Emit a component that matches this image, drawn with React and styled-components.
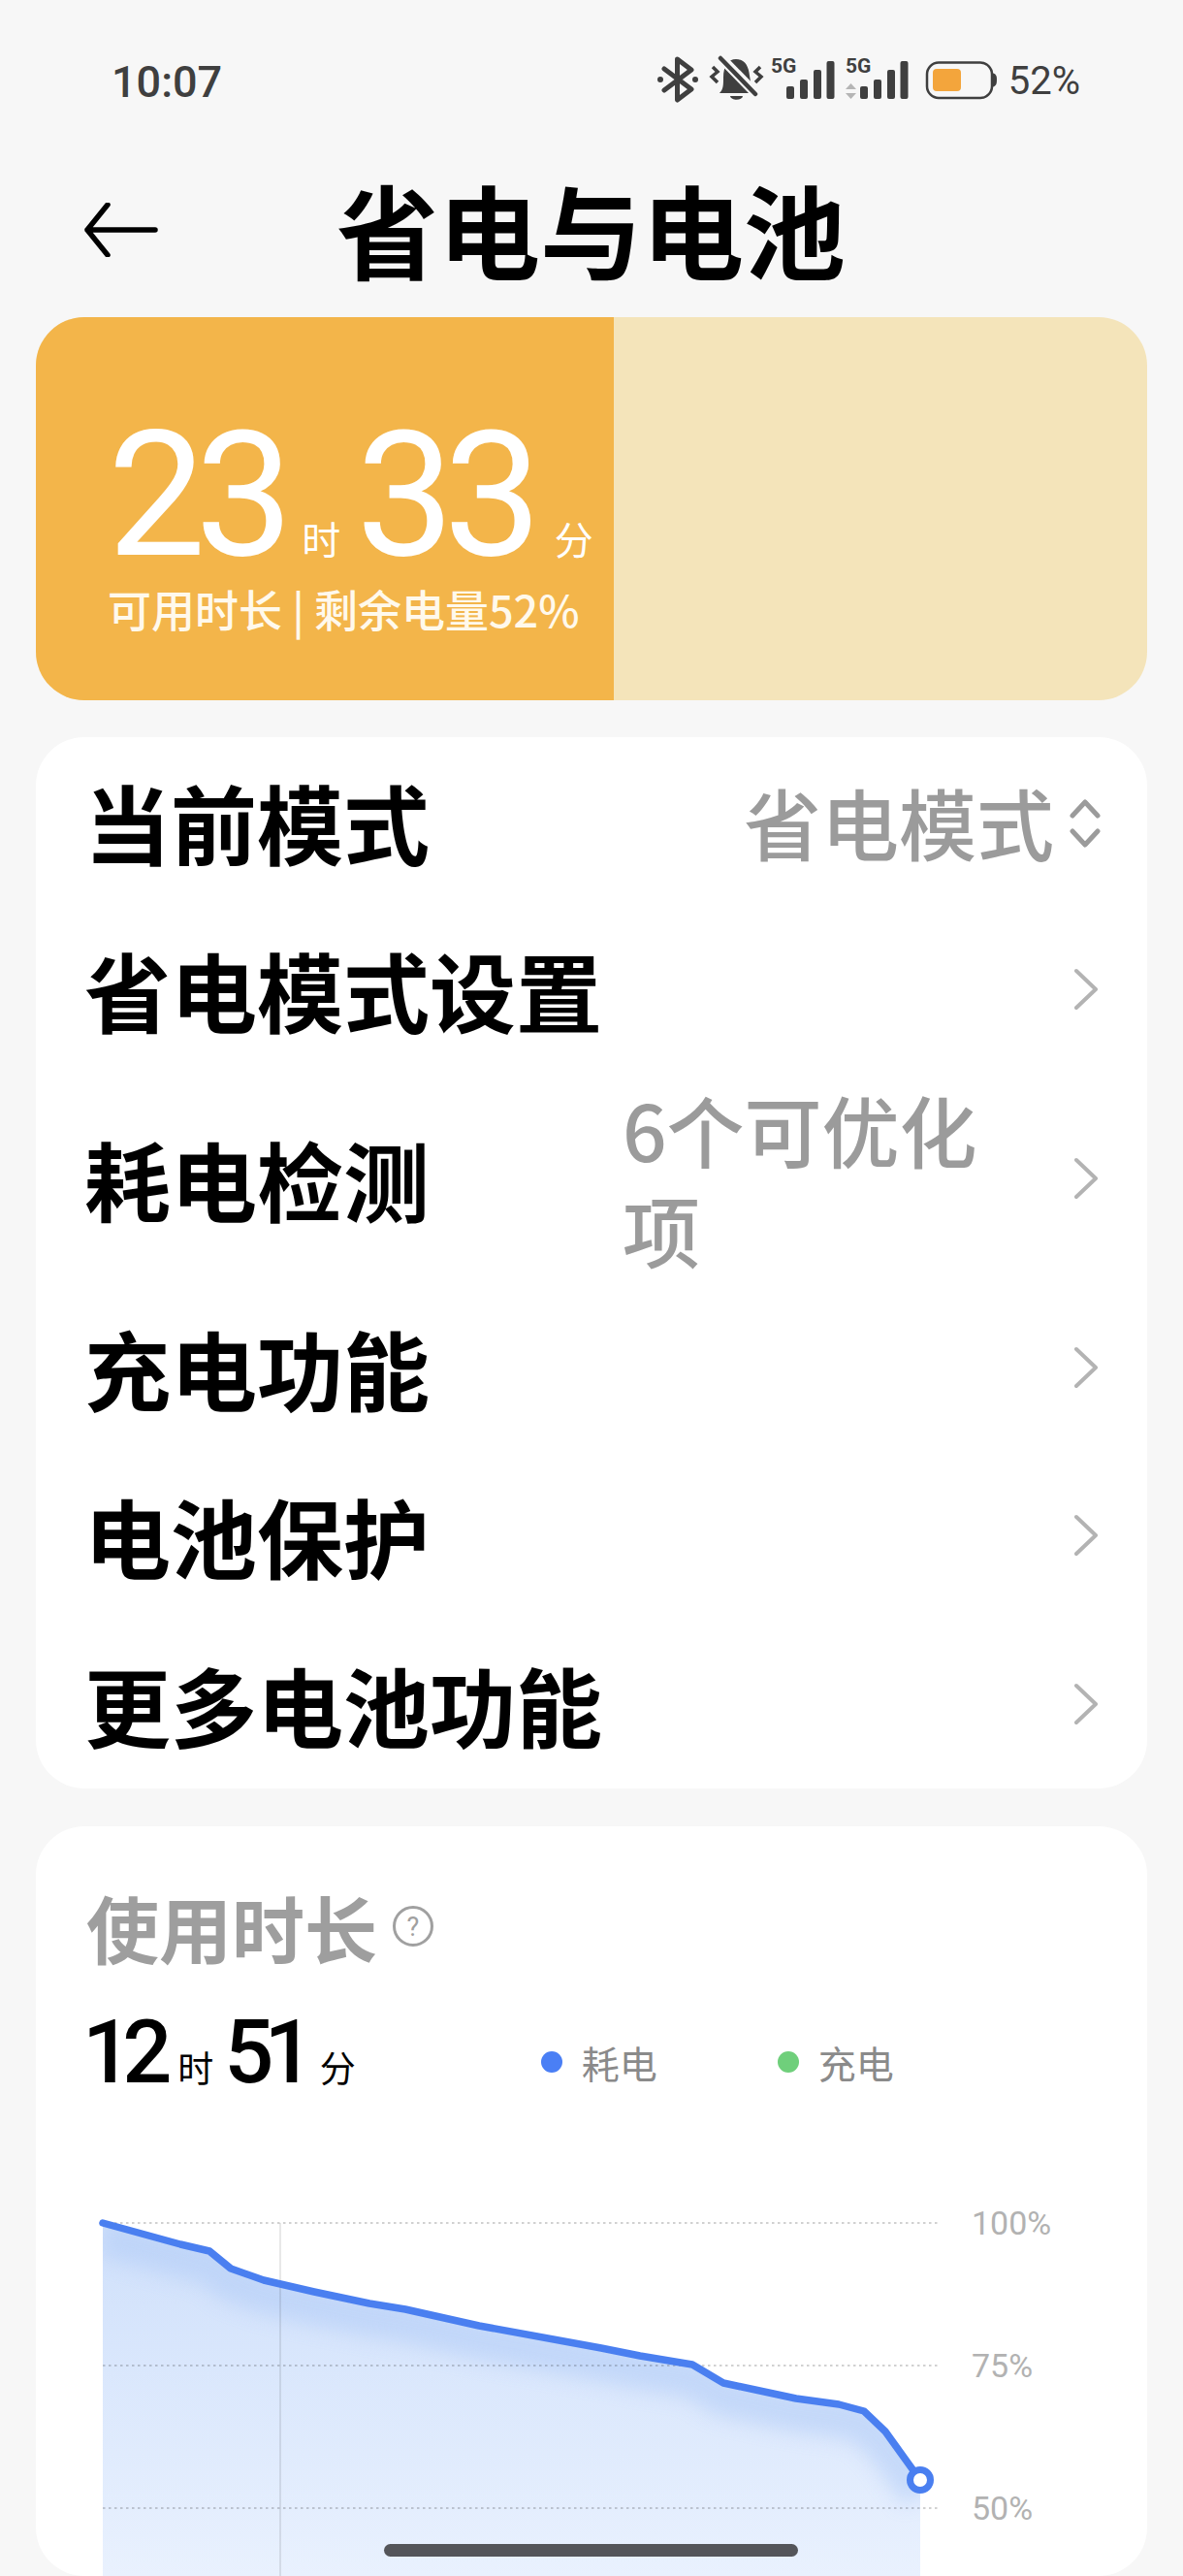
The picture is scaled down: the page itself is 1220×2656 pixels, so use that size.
import React from 'react'
import styled, { createGlobalStyle } from 'styled-components'

const GlobalStyle = createGlobalStyle`
  html, body {
    margin: 0;
    padding: 0;
    background: #f7f7f7;
  }
  * {
    box-sizing: border-box;
  }
`

const cjk = '"Noto Sans CJK SC", "Noto Sans", sans-serif'
const latin = 'Roboto, "Noto Sans CJK SC", sans-serif'

const Page = styled.div`
  position: relative;
  width: 1220px;
  height: 2656px;
  padding: 0 37px;
  overflow: hidden;
  background: #f7f7f7;
  font-family: ${cjk};
`

const StatusBar = styled.div`
  height: 168px;
  display: flex;
  align-items: center;
  padding: 0 69px 0 78px;
  color: #3f3f3f;
  font-family: ${latin};
`

const Clock = styled.span`
  font-size: 45px;
  font-weight: 500;
  flex: 1;
`

const Percent = styled.span`
  font-size: 40px;
  font-weight: 400;
  margin-left: 11px;
  margin-top: -2px;
`

const StatusIcons = styled.svg`
  display: block;
  width: 352px;
  height: 50px;
  margin-top: -6px;
`

const Header = styled.div`
  height: 159px;
  padding-bottom: 28px;
  display: flex;
  align-items: center;
`

const BackIcon = styled.svg`
  width: 76px;
  height: 56px;
  margin-left: 50px;
  margin-top: 6px;
`

const Title = styled.h1`
  margin: 0 0 0 184px;
  font-size: 105px;
  line-height: 120px;
  font-weight: 700;
  color: #000;
`

const HeroCard = styled.div`
  height: 395px;
  display: flex;
  border-radius: 50px;
  overflow: hidden;
  background: #f4e4ba;
`

const HeroFill = styled.div`
  width: 596px;
  padding: 108px 0 0 74px;
  background: #f3b54a;
  color: #fff;
`

const HeroTime = styled.div`
  display: flex;
  align-items: baseline;
  height: 152px;
`

const HeroNumber = styled.span`
  font-family: ${latin};
  font-size: 180px;
  line-height: 152px;
  font-weight: 400;
  letter-spacing: -11px;
  margin-left: ${p => p.$gap}px;
`

const HeroUnit = styled.span`
  font-size: 40px;
  line-height: 40px;
  margin-left: ${p => p.$gap}px;
`

const HeroCaption = styled.div`
  margin-top: 11px;
  font-size: 45px;
  line-height: 60px;
  font-weight: 500;
  white-space: nowrap;
  color: #fff9ec;
`

const Card = styled.section`
  margin-top: ${p => p.$top}px;
  border-radius: 50px;
  background: #fff;
`

const Row = styled.div`
  height: ${p => (p.$tall ? 216 : 173.5)}px;
  display: flex;
  align-items: center;
  padding: 0 51px 0 50px;
`

const RowLabel = styled.span`
  flex: 1;
  font-size: 89px;
  line-height: 110px;
  font-weight: 700;
  color: #000;
  white-space: nowrap;
`

const RowValue = styled.span`
  width: ${p => (p.$wrap ? '430px' : 'auto')};
  margin-right: ${p => (p.$wrap ? 36 : 16)}px;
  font-size: 80px;
  line-height: 103px;
  font-weight: 500;
  color: #9b9b9b;
`

const Chevron = styled.svg`
  display: block;
  width: 24px;
  height: 44px;
  fill: none;
  stroke: #b3b3b3;
  stroke-width: 4;
  stroke-linecap: round;
  stroke-linejoin: round;
`

const UpDown = styled.svg`
  display: block;
  width: 32px;
  height: 50px;
  margin-right: -3px;
  margin-top: 4px;
  fill: none;
  stroke: #9b9b9b;
  stroke-width: 5;
  stroke-linecap: round;
  stroke-linejoin: round;
`

const UsageCard = styled(Card)`
  padding-top: 54px;
`

const UsageTitle = styled.div`
  display: flex;
  align-items: center;
  padding-left: 52px;
  height: 100px;
`

const UsageHeading = styled.h2`
  margin: 0;
  font-size: 75px;
  line-height: 100px;
  font-weight: 700;
  color: #9e9e9e;
`

const HelpIcon = styled.svg`
  display: block;
  width: 44px;
  height: 44px;
  margin-left: 15px;
  margin-top: -2px;
`

const StatRow = styled.div`
  margin-top: 35px;
  height: 90px;
  display: flex;
  align-items: baseline;
  padding-left: 48px;
  color: #000;
`

const StatNumber = styled.span`
  font-family: ${latin};
  font-size: 90px;
  line-height: 90px;
  font-weight: 500;
  letter-spacing: -10px;
  margin-left: ${p => p.$gap}px;
`

const StatUnit = styled.span`
  font-size: 37px;
  line-height: 40px;
  margin-left: ${p => p.$gap}px;
`

const Legend = styled.div`
  display: flex;
  align-items: center;
  gap: 124px;
  margin-left: 191px;
  align-self: center;
  margin-top: 18px;
`

const LegendItem = styled.span`
  display: flex;
  align-items: center;
  gap: 20px;
  font-size: 39px;
  line-height: 40px;
  color: #8a8a8a;
`

const Dot = styled.i`
  display: block;
  width: 22px;
  height: 22px;
  border-radius: 50%;
  background: ${p => p.$color};
`

const Chart = styled.svg`
  display: block;
  width: 1146px;
  height: 416px;
  margin-top: 78px;
`

const AxisLabel = styled.text`
  font-family: ${latin};
  font-size: 34px;
  fill: #b2b2b2;
  dominant-baseline: central;
`

const HomeBar = styled.div`
  position: absolute;
  left: 396px;
  top: 2623px;
  width: 427px;
  height: 13px;
  border-radius: 7px;
  background: #54555a;
`

const linePoints = [
  [106, 2292], [186, 2314], [216, 2321], [238, 2339], [272, 2351], [324, 2363],
  [381, 2375], [418, 2381], [494, 2398], [620, 2421], [660, 2429], [714, 2438],
  [746, 2457], [821, 2473], [865, 2479], [891, 2486], [913, 2507], [949, 2557],
]
const linePath = 'M' + linePoints.map(p => p.join(' ')).join(' L')
const areaPath = `${linePath} L949 2656 L106 2656 Z`

const BatteryChart = () => (
  <Chart viewBox="37 2240 1146 416">
    <defs>
      <linearGradient id="areaFill" x1="0" y1="0" x2="0" y2="1">
        <stop offset="0" stopColor="#cfe0fb" />
        <stop offset="1" stopColor="#e9f1fe" />
      </linearGradient>
      <clipPath id="areaClip">
        <path d={areaPath} />
      </clipPath>
      <filter id="soft" x="-10%" y="-30%" width="120%" height="160%">
        <feGaussianBlur stdDeviation="10" />
      </filter>
    </defs>
    <path d={areaPath} fill="url(#areaFill)" />
    <g clipPath="url(#areaClip)">
      <path d={linePath} transform="translate(0 14)" fill="none" stroke="#b4cdf7" strokeWidth="40" opacity="0.6" filter="url(#soft)" />
    </g>
    <line x1="289" y1="2292" x2="289" y2="2656" stroke="#000" strokeOpacity="0.09" strokeWidth="2" />
    {[2292, 2439, 2586].map(y => (
      <line key={y} x1="106" y1={y} x2="967" y2={y} stroke="#000" strokeOpacity="0.18" strokeWidth="2" strokeDasharray="2.5 3.5" />
    ))}
    <path d={linePath} fill="none" stroke="#4a7ff0" strokeWidth="7.5" strokeLinecap="round" strokeLinejoin="round" />
    <circle cx="949" cy="2557" r="10.5" fill="#fff" stroke="#4a7ff0" strokeWidth="7" />
    <AxisLabel x="1002" y="2292">100%</AxisLabel>
    <AxisLabel x="1002" y="2439">75%</AxisLabel>
    <AxisLabel x="1002" y="2586">50%</AxisLabel>
  </Chart>
)

const Signal = ({ x, arrows }) => (
  <g>
    <text x={x} y="75" fontFamily="Roboto, sans-serif" fontWeight="700" fontSize="21" fill="#3f3f3f">5G</text>
    {arrows && (
      <g fill="#b5b5b5">
        <path d="M873 92 L878.5 86 L884 92 Z" />
        <path d="M873 96 L884 96 L878.5 102 Z" />
      </g>
    )}
    {[[0, 89], [14, 82], [28, 72], [41.5, 63]].map(([dx, top]) => (
      <rect key={dx} x={x + (arrows ? 15 : 16) + dx} y={top} width="8" height={102 - top} rx="2" fill="#3f3f3f" />
    ))}
  </g>
)

const StatusGlyphs = () => (
  <StatusIcons viewBox="678 56 352 50">
    {/* bluetooth */}
    <g fill="none" stroke="#3f3f3f" strokeWidth="5" strokeLinejoin="round" strokeLinecap="round">
      <path d="M686 71 L714 92 L699.5 103 L699.5 61 L714 72 L686 93" />
    </g>
    <circle cx="682" cy="82" r="3" fill="#3f3f3f" />
    <circle cx="718" cy="82" r="3" fill="#3f3f3f" />
    {/* muted bell */}
    <path d="M743 96 C747 92 747 88 747 80 C747 68 752 61 760 61 C769 61 773 68 774 78 L777 96 Z" fill="#3f3f3f" />
    <path d="M754 99 L767 99 C766 104 755 104 754 99 Z" fill="#3f3f3f" />
    <path d="M743 58 L781 97" stroke="#f7f7f7" strokeWidth="10" />
    <path d="M744 60 L780 97" stroke="#3f3f3f" strokeWidth="4.5" strokeLinecap="round" />
    <path d="M736 69 L741 74 L735 79 L741 85" stroke="#3f3f3f" strokeWidth="3.5" fill="none" />
    <path d="M785 69 L780 74 L786 79 L780 85" stroke="#3f3f3f" strokeWidth="3.5" fill="none" />
    <Signal x={796} />
    <Signal x={873} arrows />
    {/* battery */}
    <rect x="957" y="64.5" width="67" height="36.5" rx="12" fill="none" stroke="#3f3f3f" strokeWidth="2.5" />
    <rect x="963" y="71" width="29" height="23" rx="4" fill="#f3a53c" />
    <path d="M1024 75 C1028 76 1029 78 1029 82 C1029 87 1028 89 1024 90 Z" fill="#3f3f3f" />
  </StatusIcons>
)

const ChevronRight = () => (
  <Chevron viewBox="0 0 24 44">
    <path d="M2 3 L22 22 L2 41" />
  </Chevron>
)

const menuRows = [
  { label: '省电模式设置' },
  { label: '耗电检测', value: '6个可优化项', tall: true },
  { label: '充电功能' },
  { label: '电池保护' },
  { label: '更多电池功能' },
]

export default function App() {
  return (
    <Page>
      <GlobalStyle />
      <StatusBar>
        <Clock>10:07</Clock>
        <StatusGlyphs />
        <Percent>52%</Percent>
      </StatusBar>

      <Header>
        <BackIcon viewBox="0 0 76 56" fill="none" stroke="#000" strokeWidth="5.5" strokeLinecap="round" strokeLinejoin="round">
          <path d="M73 28 L3 28 M24 2 L3 28 L24 54" />
        </BackIcon>
        <Title>省电与电池</Title>
      </Header>

      <HeroCard>
        <HeroFill>
          <HeroTime>
            <HeroNumber $gap={0}>23</HeroNumber>
            <HeroUnit $gap={20}>时</HeroUnit>
            <HeroNumber $gap={16}>33</HeroNumber>
            <HeroUnit $gap={24}>分</HeroUnit>
          </HeroTime>
          <HeroCaption>可用时长 | 剩余电量52%</HeroCaption>
        </HeroFill>
      </HeroCard>

      <Card $top={38}>
        <Row>
          <RowLabel>当前模式</RowLabel>
          <RowValue>省电模式</RowValue>
          <UpDown viewBox="0 0 32 50">
            <path d="M3 17 L16 3 L29 17 M3 33 L16 47 L29 33" />
          </UpDown>
        </Row>
        {menuRows.map(row => (
          <Row key={row.label} $tall={row.tall}>
            <RowLabel>{row.label}</RowLabel>
            {row.value && <RowValue $wrap>{row.value}</RowValue>}
            <ChevronRight />
          </Row>
        ))}
      </Card>

      <UsageCard $top={39}>
        <UsageTitle>
          <UsageHeading>使用时长</UsageHeading>
          <HelpIcon viewBox="0 0 44 44">
            <circle cx="22" cy="22" r="19.5" fill="none" stroke="#a0a0a0" strokeWidth="3" />
            <text x="22" y="32" textAnchor="middle" fontFamily="Roboto, sans-serif" fontSize="27" fill="#a0a0a0">?</text>
          </HelpIcon>
        </UsageTitle>
        <StatRow>
          <StatNumber $gap={0}>12</StatNumber>
          <StatUnit $gap={16}>时</StatUnit>
          <StatNumber $gap={11}>51</StatNumber>
          <StatUnit $gap={16}>分</StatUnit>
          <Legend>
            <LegendItem><Dot $color="#4a7ff5" />耗电</LegendItem>
            <LegendItem><Dot $color="#6fcf7b" />充电</LegendItem>
          </Legend>
        </StatRow>
        <BatteryChart />
      </UsageCard>

      <HomeBar />
    </Page>
  )
}
